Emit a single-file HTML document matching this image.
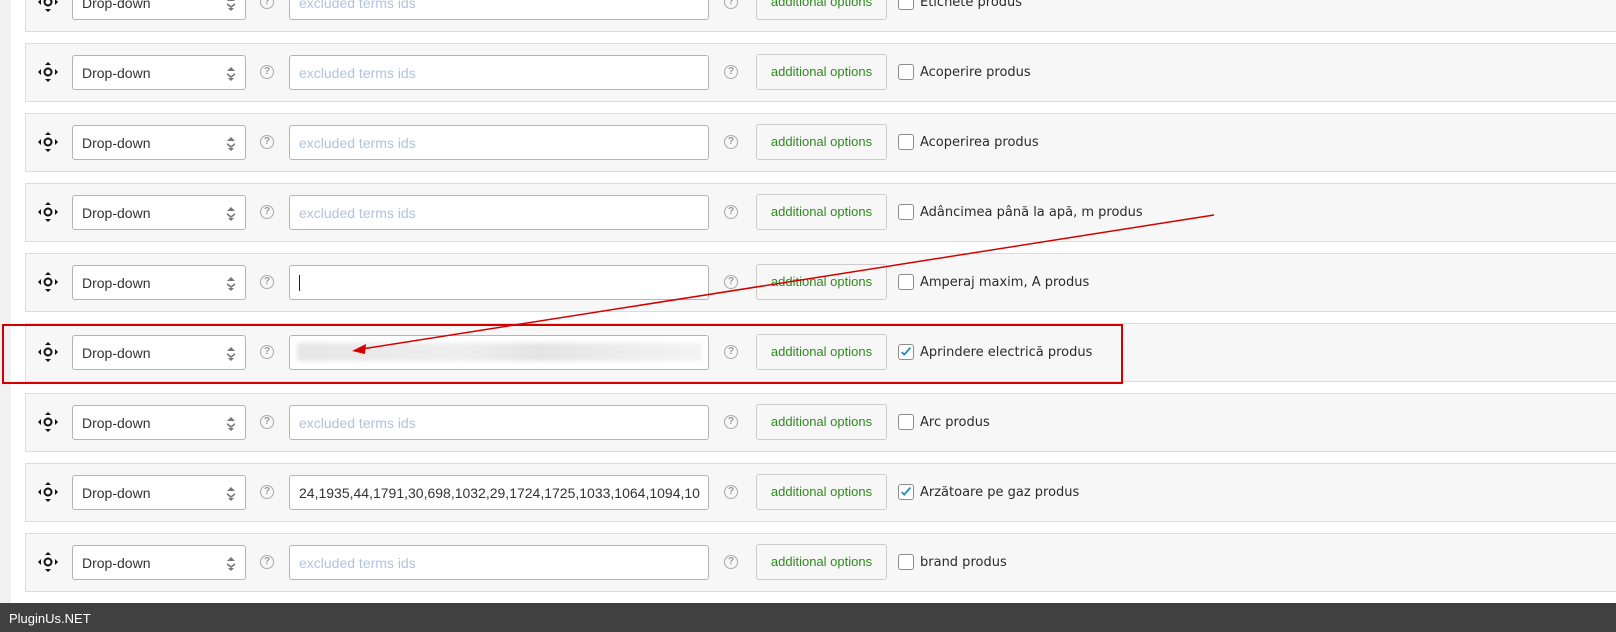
<!DOCTYPE html>
<html><head><meta charset="utf-8"><style>
*{box-sizing:border-box;margin:0;padding:0}
body{width:1616px;height:632px;overflow:hidden;background:#fff;font-family:"Liberation Sans",Arial,sans-serif;position:relative}
.strip{position:absolute;left:0;top:0;width:11px;height:632px;background:#f1f1f1}
.row{position:absolute;left:25px;width:1600px;height:59px;background:#f7f7f7;border:1px solid #dcdcdc}
.mv{position:absolute;left:11px;top:17px;width:22px;height:22px}
.sel{position:absolute;left:46px;top:11px;width:174px;height:35px;background:#fff;border:1px solid #b4b4b4;border-radius:3px;font-size:14px;color:#333;padding:9px 0 0 9px}
.arr{position:absolute;right:8px;top:10px;width:12px;height:16px}
.q{position:absolute;width:14px;height:14px;border:1.5px solid #aaa;border-radius:50%;font-size:10px;color:#999;text-align:center;line-height:11px;font-weight:bold}
.inp{position:absolute;left:263px;top:11px;width:420px;height:35px;background:#fff;border:1px solid #b4b4b4;border-radius:3px;font-size:14px;color:#333;padding:9px 0 0 9px;white-space:nowrap;overflow:hidden}
.ph{color:#b0c4de}
.btn{position:absolute;left:730px;top:10px;width:131px;height:36px;background:#f7f7f7;border:1px solid #ccc;border-radius:3px;font-size:13px;color:#2e8b1e;text-align:center;line-height:34px}
.cb{position:absolute;left:872px;top:20px;width:16px;height:16px;border:1px solid #8c8c8c;border-radius:3px;background:#fff}
.lb{position:absolute;left:894px;top:21px;color:#2b2b2b;font-family:"DejaVu Sans",sans-serif;font-size:13px}
.q1{left:234px;top:21px}
.q2{left:698px;top:21px}
.foot{position:absolute;left:0;top:603px;width:1616px;height:29px;background:#404040;color:#fff;font-size:13px;padding:8px 0 0 9px}
</style></head><body>
<div class="strip"></div>
<div class="row" style="top:-27px"><svg class="mv" viewBox="0 0 22 22"><circle cx="11" cy="11" r="3.5" fill="none" stroke="#111" stroke-width="2"/><path d="M11 1l3 3h-6zM11 21l3-3h-6zM1 11l3-3v6zM21 11l-3-3v6z" fill="#111"/></svg><div class="sel">Drop-down<svg class="arr" viewBox="0 0 12 16"><path d="M6 1l4 4h-8zM2 7l4 3 4-3v2l-4 3-4-3zM3 12h6l-3 3z" fill="#777"/></svg></div><div class="q q1">?</div><div class="inp"><span class="ph">excluded terms ids</span></div><div class="q q2">?</div><div class="btn">additional options</div><div class="cb"></div><div class="lb">Etichete produs</div></div>
<div class="row" style="top:43px"><svg class="mv" viewBox="0 0 22 22"><circle cx="11" cy="11" r="3.5" fill="none" stroke="#111" stroke-width="2"/><path d="M11 1l3 3h-6zM11 21l3-3h-6zM1 11l3-3v6zM21 11l-3-3v6z" fill="#111"/></svg><div class="sel">Drop-down<svg class="arr" viewBox="0 0 12 16"><path d="M6 1l4 4h-8zM2 7l4 3 4-3v2l-4 3-4-3zM3 12h6l-3 3z" fill="#777"/></svg></div><div class="q q1">?</div><div class="inp"><span class="ph">excluded terms ids</span></div><div class="q q2">?</div><div class="btn">additional options</div><div class="cb"></div><div class="lb">Acoperire produs</div></div>
<div class="row" style="top:113px"><svg class="mv" viewBox="0 0 22 22"><circle cx="11" cy="11" r="3.5" fill="none" stroke="#111" stroke-width="2"/><path d="M11 1l3 3h-6zM11 21l3-3h-6zM1 11l3-3v6zM21 11l-3-3v6z" fill="#111"/></svg><div class="sel">Drop-down<svg class="arr" viewBox="0 0 12 16"><path d="M6 1l4 4h-8zM2 7l4 3 4-3v2l-4 3-4-3zM3 12h6l-3 3z" fill="#777"/></svg></div><div class="q q1">?</div><div class="inp"><span class="ph">excluded terms ids</span></div><div class="q q2">?</div><div class="btn">additional options</div><div class="cb"></div><div class="lb">Acoperirea produs</div></div>
<div class="row" style="top:183px"><svg class="mv" viewBox="0 0 22 22"><circle cx="11" cy="11" r="3.5" fill="none" stroke="#111" stroke-width="2"/><path d="M11 1l3 3h-6zM11 21l3-3h-6zM1 11l3-3v6zM21 11l-3-3v6z" fill="#111"/></svg><div class="sel">Drop-down<svg class="arr" viewBox="0 0 12 16"><path d="M6 1l4 4h-8zM2 7l4 3 4-3v2l-4 3-4-3zM3 12h6l-3 3z" fill="#777"/></svg></div><div class="q q1">?</div><div class="inp"><span class="ph">excluded terms ids</span></div><div class="q q2">?</div><div class="btn">additional options</div><div class="cb"></div><div class="lb">Adâncimea până la apă, m produs</div></div>
<div class="row" style="top:253px"><svg class="mv" viewBox="0 0 22 22"><circle cx="11" cy="11" r="3.5" fill="none" stroke="#111" stroke-width="2"/><path d="M11 1l3 3h-6zM11 21l3-3h-6zM1 11l3-3v6zM21 11l-3-3v6z" fill="#111"/></svg><div class="sel">Drop-down<svg class="arr" viewBox="0 0 12 16"><path d="M6 1l4 4h-8zM2 7l4 3 4-3v2l-4 3-4-3zM3 12h6l-3 3z" fill="#777"/></svg></div><div class="q q1">?</div><div class="inp"><span style="display:inline-block;width:1px;height:16px;background:#222"></span></div><div class="q q2">?</div><div class="btn">additional options</div><div class="cb"></div><div class="lb">Amperaj maxim, A produs</div></div>
<div class="row" style="top:323px"><svg class="mv" viewBox="0 0 22 22"><circle cx="11" cy="11" r="3.5" fill="none" stroke="#111" stroke-width="2"/><path d="M11 1l3 3h-6zM11 21l3-3h-6zM1 11l3-3v6zM21 11l-3-3v6z" fill="#111"/></svg><div class="sel">Drop-down<svg class="arr" viewBox="0 0 12 16"><path d="M6 1l4 4h-8zM2 7l4 3 4-3v2l-4 3-4-3zM3 12h6l-3 3z" fill="#777"/></svg></div><div class="q q1">?</div><div class="inp"><div style="position:absolute;left:7px;top:7px;width:405px;height:18px;background:linear-gradient(90deg,#e6e6e6,#eee 40%,#e4e4e4 60%,#f4f4f4);filter:blur(2px)"></div></div><div class="q q2">?</div><div class="btn">additional options</div><div class="cb"><svg viewBox="0 0 16 16" width="14" height="14"><path d="M3 8l3 3 7-8" fill="none" stroke="#1e8cbe" stroke-width="2"/></svg></div><div class="lb">Aprindere electrică produs</div></div>
<div class="row" style="top:393px"><svg class="mv" viewBox="0 0 22 22"><circle cx="11" cy="11" r="3.5" fill="none" stroke="#111" stroke-width="2"/><path d="M11 1l3 3h-6zM11 21l3-3h-6zM1 11l3-3v6zM21 11l-3-3v6z" fill="#111"/></svg><div class="sel">Drop-down<svg class="arr" viewBox="0 0 12 16"><path d="M6 1l4 4h-8zM2 7l4 3 4-3v2l-4 3-4-3zM3 12h6l-3 3z" fill="#777"/></svg></div><div class="q q1">?</div><div class="inp"><span class="ph">excluded terms ids</span></div><div class="q q2">?</div><div class="btn">additional options</div><div class="cb"></div><div class="lb">Arc produs</div></div>
<div class="row" style="top:463px"><svg class="mv" viewBox="0 0 22 22"><circle cx="11" cy="11" r="3.5" fill="none" stroke="#111" stroke-width="2"/><path d="M11 1l3 3h-6zM11 21l3-3h-6zM1 11l3-3v6zM21 11l-3-3v6z" fill="#111"/></svg><div class="sel">Drop-down<svg class="arr" viewBox="0 0 12 16"><path d="M6 1l4 4h-8zM2 7l4 3 4-3v2l-4 3-4-3zM3 12h6l-3 3z" fill="#777"/></svg></div><div class="q q1">?</div><div class="inp">24,1935,44,1791,30,698,1032,29,1724,1725,1033,1064,1094,10</div><div class="q q2">?</div><div class="btn">additional options</div><div class="cb"><svg viewBox="0 0 16 16" width="14" height="14"><path d="M3 8l3 3 7-8" fill="none" stroke="#1e8cbe" stroke-width="2"/></svg></div><div class="lb">Arzătoare pe gaz produs</div></div>
<div class="row" style="top:533px"><svg class="mv" viewBox="0 0 22 22"><circle cx="11" cy="11" r="3.5" fill="none" stroke="#111" stroke-width="2"/><path d="M11 1l3 3h-6zM11 21l3-3h-6zM1 11l3-3v6zM21 11l-3-3v6z" fill="#111"/></svg><div class="sel">Drop-down<svg class="arr" viewBox="0 0 12 16"><path d="M6 1l4 4h-8zM2 7l4 3 4-3v2l-4 3-4-3zM3 12h6l-3 3z" fill="#777"/></svg></div><div class="q q1">?</div><div class="inp"><span class="ph">excluded terms ids</span></div><div class="q q2">?</div><div class="btn">additional options</div><div class="cb"></div><div class="lb">brand produs</div></div>
<div style="position:absolute;left:2px;top:324px;width:1121px;height:60px;border:2px solid #d40000"></div>
<svg style="position:absolute;left:0;top:0" width="1616" height="632"><line x1="1214" y1="215" x2="362" y2="349" stroke="#d40000" stroke-width="1.5"/><path d="M352 351l14-7-1 10z" fill="#d40000"/></svg>
<div class="foot">PluginUs.NET</div>
</body></html>
